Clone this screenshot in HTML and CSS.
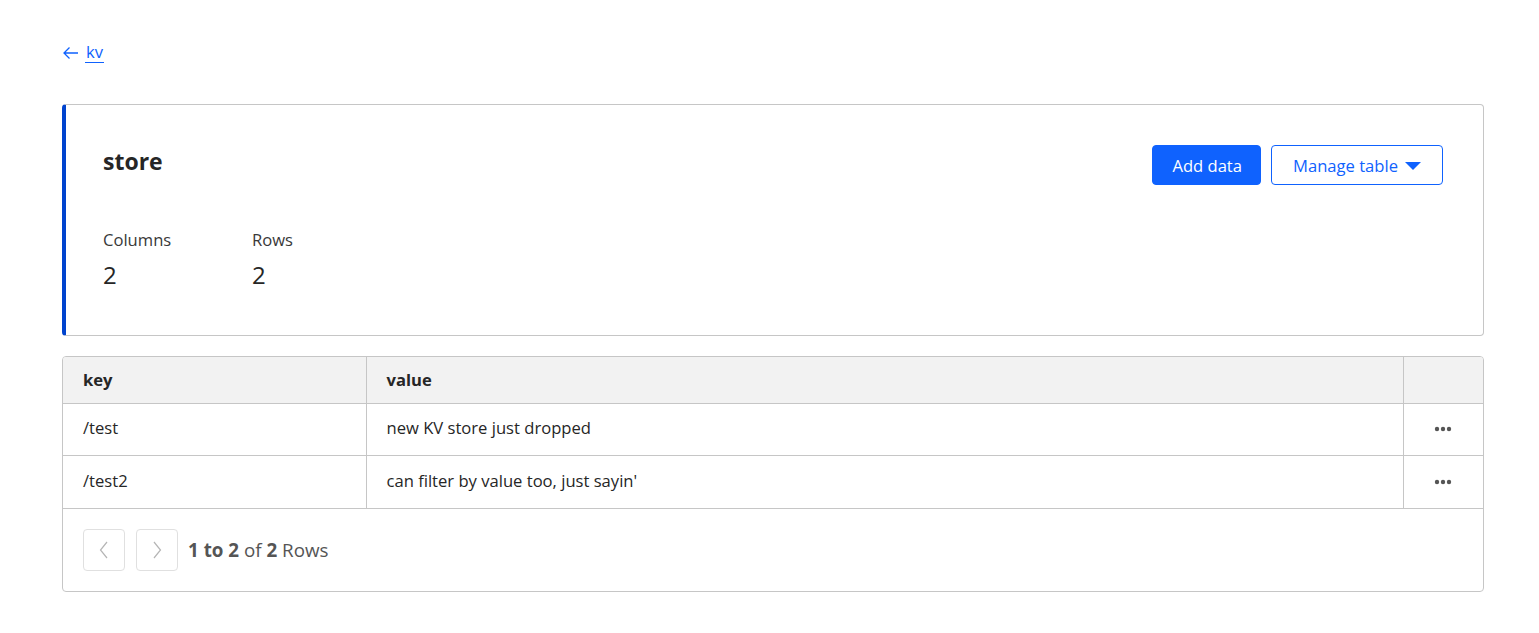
FILE: index.html
```html
<!DOCTYPE html>
<html lang="en">
<head>
<meta charset="utf-8">
<title>store</title>
<link rel="stylesheet" href="styles.css">
</head>
<body>
<main class="page">
  <nav class="crumb">
    <a class="back" href="#">
      <svg class="back-arrow" width="17" height="14" viewBox="0 0 17 14" aria-hidden="true">
        <path d="M16 7H2M7.5 1.5L2 7l5.5 5.5" fill="none" stroke="#0f62fe" stroke-width="1.3"/>
      </svg>
      <span class="back-text">kv</span>
    </a>
  </nav>

  <section class="card">
    <div class="card-head">
      <h1 class="title">store</h1>
      <div class="actions">
        <button class="btn btn-primary">Add data</button>
        <button class="btn btn-outline">Manage table
          <svg class="caret" width="16" height="10" viewBox="0 0 16 10" aria-hidden="true"><path d="M0 1h16L8 9z" fill="#0f62fe"/></svg>
        </button>
      </div>
    </div>
    <div class="stats">
      <div class="stat">
        <div class="stat-label">Columns</div>
        <div class="stat-value">2</div>
      </div>
      <div class="stat">
        <div class="stat-label">Rows</div>
        <div class="stat-value">2</div>
      </div>
    </div>
  </section>

  <section class="table-wrap">
    <table class="grid">
      <colgroup>
        <col class="c-key"><col class="c-val"><col class="c-act">
      </colgroup>
      <thead>
        <tr><th>key</th><th>value</th><th></th></tr>
      </thead>
      <tbody>
        <tr><td>/test</td><td>new KV store just dropped</td><td class="act"><svg class="dots" width="18" height="6" viewBox="0 0 18 6"><circle cx="3" cy="3" r="2.2"/><circle cx="9" cy="3" r="2.2"/><circle cx="15" cy="3" r="2.2"/></svg></td></tr>
        <tr><td>/test2</td><td>can filter by value too, just sayin'</td><td class="act"><svg class="dots" width="18" height="6" viewBox="0 0 18 6"><circle cx="3" cy="3" r="2.2"/><circle cx="9" cy="3" r="2.2"/><circle cx="15" cy="3" r="2.2"/></svg></td></tr>
      </tbody>
    </table>
    <div class="pager">
      <button class="pg-btn" aria-label="Previous">
        <svg width="10" height="18" viewBox="0 0 10 18"><path d="M8 1L1.5 9 8 17" fill="none" stroke="#b5b5b5" stroke-width="1.2"/></svg>
      </button>
      <button class="pg-btn" aria-label="Next">
        <svg width="10" height="18" viewBox="0 0 10 18"><path d="M2 1l6.5 8L2 17" fill="none" stroke="#b5b5b5" stroke-width="1.2"/></svg>
      </button>
      <span class="pg-text"><b>1</b> <b>to</b> <b>2</b> of <b>2</b> Rows</span>
    </div>
  </section>
</main>
</body>
</html>
```

FILE: styles.css
```css
* { box-sizing: border-box; }
html, body { margin: 0; padding: 0; background: #fff; }
body {
  font-family: "Open Sans", "Noto Sans", sans-serif;
  color: #262626;
  font-size: 16.6px;
}
.page {
  padding: 40px 55px 0 62px;
}
.crumb {
  height: 24px;
  display: flex;
  align-items: center;
}
.back {
  display: inline-flex;
  align-items: center;
  gap: 6px;
  text-decoration: none;
  color: #0f62fe;
}
.back-arrow { display: block; margin-top: 1px; }
.back-text {
  font-size: 16.6px;
  line-height: 20px;
  border-bottom: 1px solid #0f62fe;
  padding: 0 1px;
  margin-top: 1px;
}
.card {
  margin-top: 40px;
  border: 1px solid #c6c6c6;
  border-left: 4px solid #0043ce;
  border-radius: 4px;
  padding: 40px 40px 46px 37px;
  height: 232px;
}
.card-head {
  display: flex;
  justify-content: space-between;
  align-items: flex-start;
}
.title {
  margin: 0;
  font-size: 23px;
  font-weight: 700;
  line-height: 32px;
  color: #262626;
}
.actions { display: flex; gap: 10px; }
.btn {
  font-family: inherit;
  font-size: 16.6px;
  height: 40px;
  border-radius: 4px;
  padding: 0 18px 0 19px;
  display: inline-flex;
  align-items: center;
  cursor: pointer;
}
.btn-primary {
  background: #0f62fe;
  color: #fff;
  border: 1px solid #0f62fe;
}
.btn-outline {
  background: #fff;
  color: #0f62fe;
  border: 1px solid #0f62fe;
  gap: 7px;
  padding: 0 21px 0 21px;
}
.caret { display: block; margin-top: 1px; }
.stats {
  display: flex;
  margin-top: 44px;
}
.stat { width: 149px; }
.stat-label {
  font-size: 16.6px;
  line-height: 22px;
  color: #393939;
}
.stat-value {
  font-size: 24px;
  line-height: 32px;
  margin-top: 8px;
  color: #262626;
}
.table-wrap {
  margin-top: 20px;
  border: 1px solid #c6c6c6;
  border-radius: 4px;
  overflow: hidden;
}
.grid {
  width: 100%;
  border-collapse: collapse;
  table-layout: fixed;
}
.c-key { width: 303px; }
.c-act { width: 80px; }
.grid th, .grid td {
  text-align: left;
  padding: 0 20px;
  font-size: 16.6px;
  border-right: 1px solid #c6c6c6;
  border-bottom: 1px solid #c6c6c6;
}
.grid th:last-child, .grid td:last-child { border-right: none; }
.grid th {
  background: #f2f2f2;
  height: 46px;
  font-weight: 700;
  color: #262626;
}
.grid td {
  height: 52.5px;
  padding-bottom: 3px;
  color: #262626;
}
.grid td.act { text-align: center; padding: 0 0 4px 0; }
.dots { display: inline-block; vertical-align: middle; fill: #555; }
.pager {
  height: 82px;
  display: flex;
  align-items: center;
  padding: 0 20px;
  gap: 11px;
}
.pg-btn {
  width: 42px;
  height: 42px;
  border: 1px solid #e0e0e0;
  border-radius: 4px;
  background: #fff;
  display: flex;
  align-items: center;
  justify-content: center;
  padding: 0;
}
.pg-text {
  font-size: 18.8px;
  color: #555;
  margin-left: -1px;
}
.pg-text b { color: #555; font-weight: 700; }
```
